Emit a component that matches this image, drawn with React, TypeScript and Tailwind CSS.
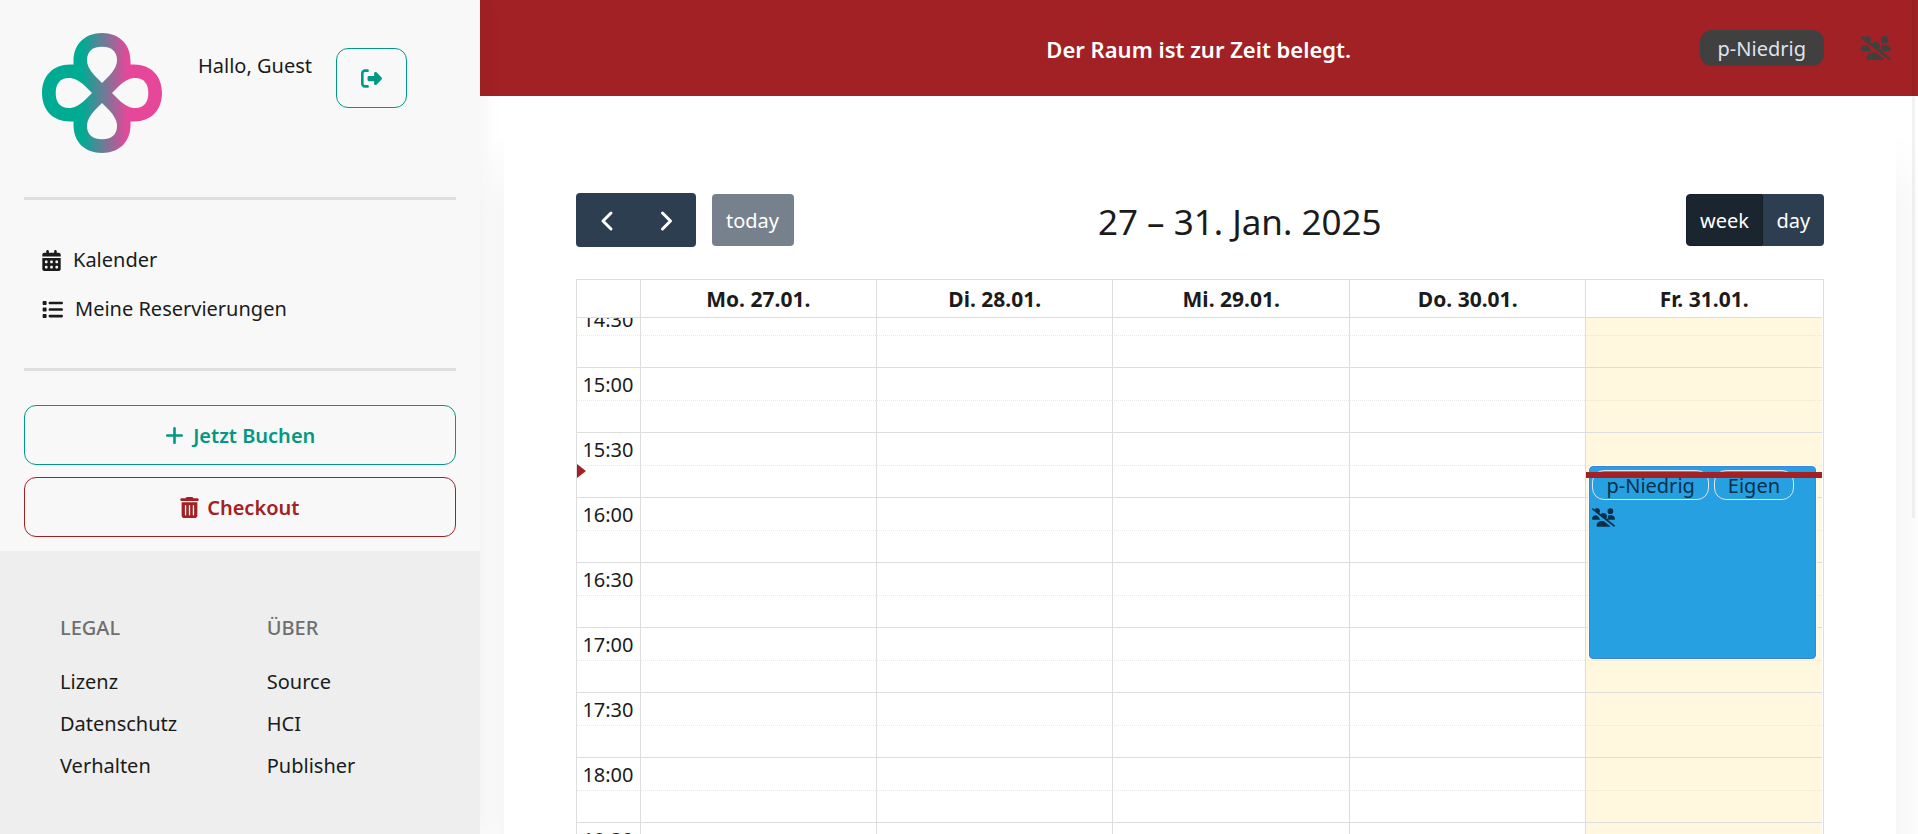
import type { ReactNode } from "react";
import {
  FaCalendarDays,
  FaList,
  FaPlus,
  FaRightFromBracket,
  FaTrashCan,
  FaUsersSlash,
} from "react-icons/fa6";

const days = ["Mo. 27.01.", "Di. 28.01.", "Mi. 29.01.", "Do. 30.01.", "Fr. 31.01."];
const slots = ["14:30", "15:00", "15:30", "16:00", "16:30", "17:00", "17:30", "18:00", "18:30", "19:00"];
const todayIndex = 4;
const nowSlot = "15:30";

const footerColumns = [
  { title: "LEGAL", links: ["Lizenz", "Datenschutz", "Verhalten"] },
  { title: "ÜBER", links: ["Source", "HCI", "Publisher"] },
];

function Logo() {
  const hole =
    "M60 50 L53 43 C47.5 37 45 32 45 27 C45 18 51 13.7 60 13.7 C69 13.7 75 18 75 27 C75 32 72.5 37 67 43 Z";
  return (
    <svg viewBox="0 0 120 120" className="size-[120px] shrink-0" role="img" aria-label="Logo">
      <defs>
        <linearGradient id="clover" gradientUnits="userSpaceOnUse" x1="40" y1="0" x2="86" y2="0">
          <stop offset="0" stopColor="#00ab94" />
          <stop offset="1" stopColor="#e64799" />
        </linearGradient>
        <mask id="holes">
          <rect width="120" height="120" fill="#fff" />
          <path d={hole} fill="#000" />
          <path d={hole} fill="#000" transform="rotate(90 60 60)" />
          <path d={hole} fill="#000" transform="rotate(180 60 60)" />
          <path d={hole} fill="#000" transform="rotate(270 60 60)" />
        </mask>
      </defs>
      <path
        mask="url(#holes)"
        fill="url(#clover)"
        d="M31.5 31.5 V28 C31.5 11 43 0 60 0 C77 0 88.5 11 88.5 28 V31.5 H92 C109 31.5 120 43 120 60 C120 77 109 88.5 92 88.5 H88.5 V92 C88.5 109 77 120 60 120 C43 120 31.5 109 31.5 92 V88.5 H28 C11 88.5 0 77 0 60 C0 43 11 31.5 28 31.5 Z"
      />
    </svg>
  );
}

function Chevron({ d }: { d: string }) {
  return (
    <svg viewBox="0 0 32 32" className="size-8" fill="none" stroke="currentColor" strokeWidth="3" strokeLinecap="round" strokeLinejoin="round" aria-hidden="true">
      <path d={d} />
    </svg>
  );
}

function Pill({ children, className }: { children: ReactNode; className: string }) {
  return <span className={`flex items-center rounded-xl pt-[2px] ${className}`}>{children}</span>;
}

function Sidebar() {
  return (
    <aside className="relative z-10 flex w-1/4 shrink-0 flex-col bg-[#f8f8f8] shadow-[0_0_24px_rgba(0,0,0,0.06)]">
      <div className="px-6">
        <header className="flex h-[197px] items-start pl-[18px] pt-[33px]">
          <Logo />
          <p className="ml-9 mt-[19px] leading-7">Hallo, Guest</p>
          <button type="button" aria-label="Abmelden" className="ml-auto mr-[49px] mt-[15px] flex h-[60px] w-[71px] items-center justify-center rounded-xl border border-[#019985] text-[#019985]">
            <FaRightFromBracket className="size-[21px]" />
          </button>
        </header>
        <hr className="border-t-[3px] border-[#dfdfdf]" />
        <nav className="flex h-[168px] flex-col gap-[21px] pl-[18px] pt-[46px]">
          <a href="#kalender" className="flex items-center gap-3 leading-7">
            <FaCalendarDays className="h-[21px] w-[19px]" />
            Kalender
          </a>
          <a href="#reservierungen" className="flex items-center gap-3 leading-7">
            <FaList className="size-[21px]" />
            Meine Reservierungen
          </a>
        </nav>
        <hr className="border-t-[3px] border-[#dfdfdf]" />
        <div className="flex flex-col gap-3 pb-[14px] pt-[34px]">
          <button type="button" className="flex h-[60px] items-center justify-center gap-2 rounded-xl border border-[#019985] font-semibold text-[#019985]">
            <FaPlus className="size-[21px]" />
            <span className="pt-[2px]">Jetzt Buchen</span>
          </button>
          <button type="button" className="flex h-[60px] items-center justify-center gap-2 rounded-xl border border-[#a12124] font-semibold text-[#a12124]">
            <FaTrashCan className="h-[21px] w-[19px]" />
            <span className="pt-[2px]">Checkout</span>
          </button>
        </div>
      </div>
      <footer className="grid grow grid-cols-2 content-start bg-[#eee] pl-[60px] pr-[6px] pt-[63px]">
        {footerColumns.map((column) => (
          <section key={column.title}>
            <h2 className="font-medium leading-7 text-[#6f6f6f]">{column.title}</h2>
            <ul className="mt-[26px] flex flex-col gap-[14px]">
              {column.links.map((link) => (
                <li key={link} className="leading-7">
                  <a href="#footer">{link}</a>
                </li>
              ))}
            </ul>
          </section>
        ))}
      </footer>
    </aside>
  );
}

function StatusBar() {
  return (
    <header className="grid h-24 shrink-0 grid-cols-[1fr_auto_1fr] items-center bg-[#a12124] px-[27px]">
      <span />
      <h1 className="pt-[2px] text-[22px] font-semibold text-white">Der Raum ist zur Zeit belegt.</h1>
      <div className="flex items-center justify-end gap-9">
        <Pill className="h-9 bg-[#404040] px-[18px] text-[#dfe3eb]">p-Niedrig</Pill>
        <FaUsersSlash className="h-6 w-[31px] text-[#404040]" aria-label="Nicht teilbar" />
      </div>
    </header>
  );
}

function Toolbar() {
  return (
    <div className="flex items-center justify-between">
      <div className="flex items-center gap-4">
        <div className="flex h-[54px] items-center rounded bg-[#2c3e50] text-white">
          <button type="button" aria-label="Zurück" className="flex h-full w-[60px] items-center justify-center">
            <Chevron d="M21 9 L13 17 L21 25" />
          </button>
          <button type="button" aria-label="Weiter" className="flex h-full w-[60px] items-center justify-center">
            <Chevron d="M12.5 9 L20.5 17 L12.5 25" />
          </button>
        </div>
        <button type="button" disabled className="h-[52px] w-[82px] rounded bg-[#76818d] pt-[2px] text-white">
          today
        </button>
      </div>
      <h2 className="pt-1 text-[35px] leading-[42px]">27 – 31. Jan. 2025</h2>
      <div className="flex h-[52px] justify-end text-white">
        <button type="button" aria-pressed="true" className="w-[77px] rounded-l border border-[#151e27] bg-[#1a252f] pt-[2px]">
          week
        </button>
        <button type="button" className="w-[61px] rounded-r bg-[#2c3e50] pt-[2px]">
          day
        </button>
      </div>
    </div>
  );
}

function ColumnWidths() {
  return (
    <colgroup>
      <col className="w-[63px]" />
      {days.map((day) => (
        <col key={day} />
      ))}
    </colgroup>
  );
}

function Booking() {
  return (
    <>
      <div className="absolute left-[3px] right-[6px] top-0 h-[193px] rounded border border-[#3788d8] bg-[#26a0e1] pl-[2px] pt-[3px] text-[#08304a] shadow-[0_0_0_1px_#fff]">
        <div className="flex gap-[5px]">
          <Pill className="h-[30px] border border-[#dfe3eb] px-[13px]">p-Niedrig</Pill>
          <Pill className="h-[30px] border border-[#dfe3eb] px-[13px]">Eigen</Pill>
        </div>
        <FaUsersSlash className="mt-2 h-[19px] w-[23px]" aria-label="Nicht teilbar" />
      </div>
      <div className="absolute inset-x-0 top-[6px] h-[6px] bg-[#a12124]" />
    </>
  );
}

function SlotRows({ time }: { time: string }) {
  const isNow = time === nowSlot;
  return (
    <>
      <tr className="h-8">
        <th scope="row" className="pb-0 pr-[6px] pt-[2px] text-right align-middle font-normal leading-7">
          {time}
        </th>
        {days.map((day, i) => (
          <td key={day} className={i === todayIndex ? "border-l border-[#ddd] bg-[#fff8df]" : "border-l border-[#ddd]"} />
        ))}
      </tr>
      <tr className="h-[33px]">
        <td className="relative border-b border-t border-[#ddd] [border-top-style:dotted] border-t-[#e9e9e9]">
          {isNow && (
            <svg viewBox="0 0 9 14" className="absolute -top-[2px] left-0 h-[14px] w-[9px]" aria-hidden="true">
              <path d="M0 0 L9 7 L0 14 Z" fill="#a12124" />
            </svg>
          )}
        </td>
        {days.map((day, i) => {
          const isToday = i === todayIndex;
          return (
            <td
              key={day}
              className={[
                "border-b border-l border-t border-[#ddd] [border-top-style:dotted]",
                isToday ? "border-t-[#ebe6d3] bg-[#fff8df]" : "border-t-[#e9e9e9]",
                isToday && isNow ? "relative" : "",
              ].join(" ")}
            >
              {isToday && isNow && <Booking />}
            </td>
          );
        })}
      </tr>
    </>
  );
}

function Calendar() {
  return (
    <div className="mt-8 border border-[#ddd] pr-px">
      <table className="w-full table-fixed border-separate border-spacing-0">
        <ColumnWidths />
        <thead>
          <tr className="h-[38px]">
            <td className="border-b border-[#ddd]" />
            {days.map((day) => (
              <th key={day} scope="col" className="border-b border-l border-[#ddd] p-0 text-[21px] font-bold leading-7">
                {day}
              </th>
            ))}
          </tr>
        </thead>
      </table>
      <div className="overflow-hidden">
        <table className="-mt-[15px] w-full table-fixed border-separate border-spacing-0">
          <ColumnWidths />
          <tbody>
            {slots.map((time) => (
              <SlotRows key={time} time={time} />
            ))}
          </tbody>
        </table>
      </div>
    </div>
  );
}

export default function App() {
  return (
    <div className="flex h-screen overflow-hidden bg-white font-['Noto_Sans',sans-serif] text-[20px] text-[#1b1b1b]">
      <Sidebar />
      <div className="relative flex min-w-0 grow flex-col">
        <StatusBar />
        <main className="min-h-0 grow overflow-hidden px-6 pr-[22px] pt-6">
          <article className="bg-white px-[72px] pb-[72px] pt-[73px] shadow-[0_48px_48px_rgba(0,0,0,0.07)]">
            <Toolbar />
            <Calendar />
          </article>
        </main>
        <div className="absolute right-[3px] top-0 h-[518px] w-[3px] bg-black/5" />
      </div>
    </div>
  );
}
